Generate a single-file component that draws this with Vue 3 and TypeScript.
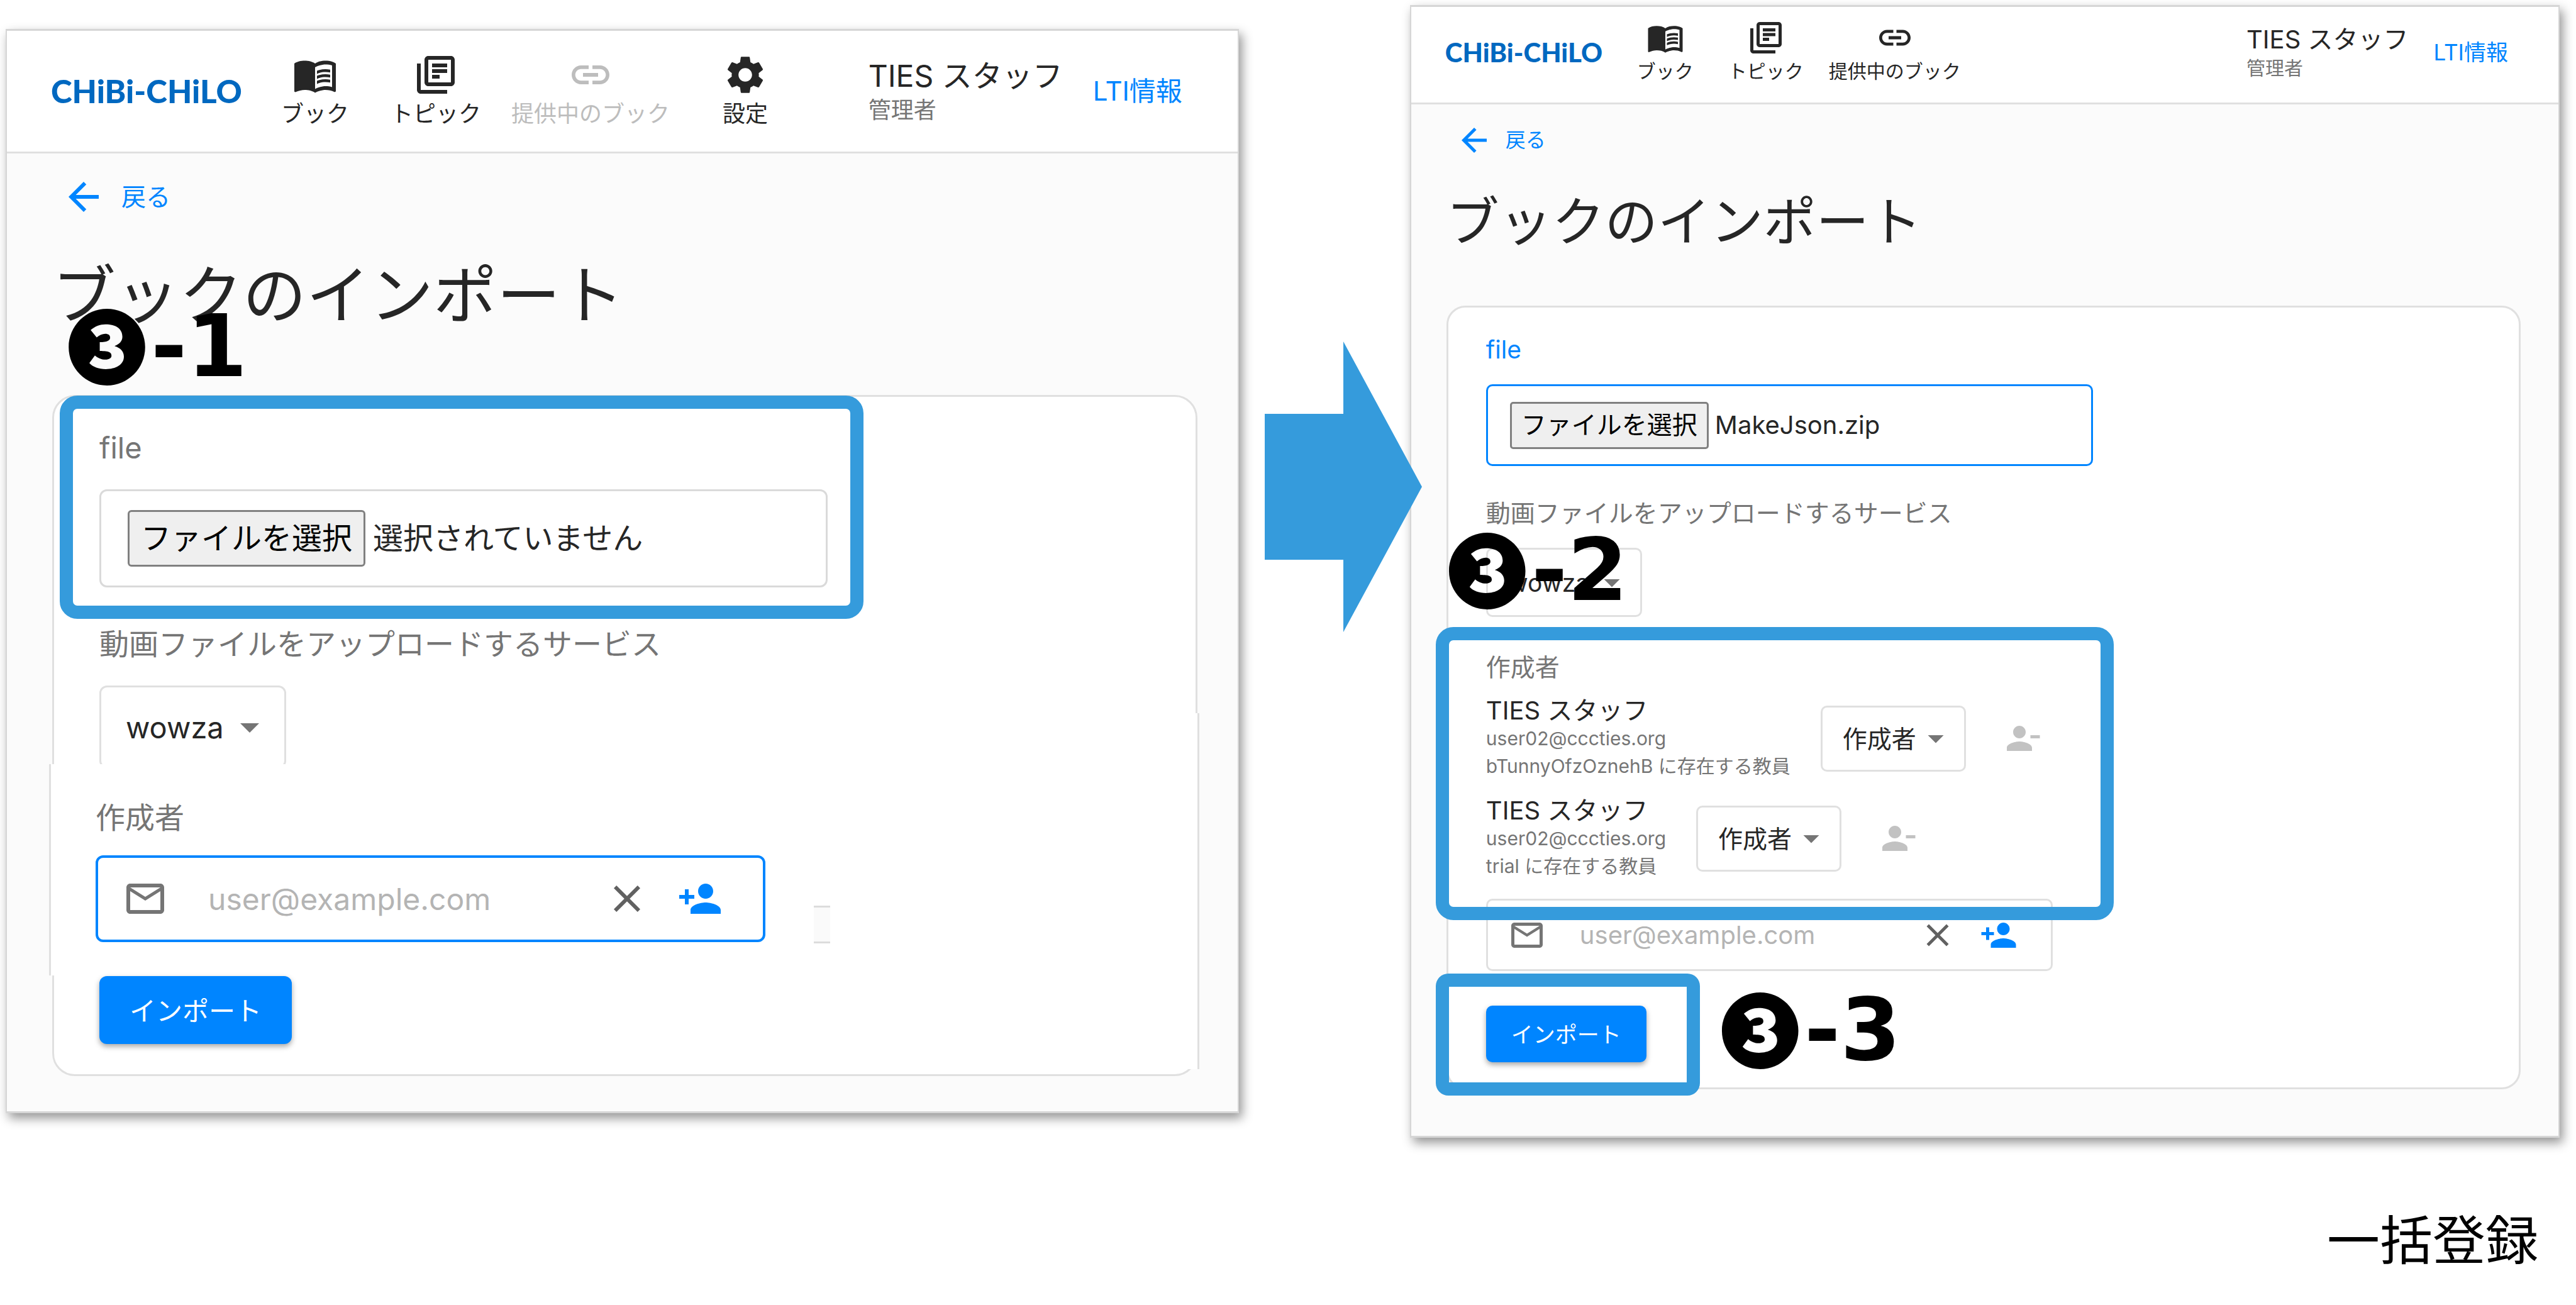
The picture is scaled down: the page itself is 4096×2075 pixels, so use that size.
<script setup lang="ts">
import { ref } from 'vue'

interface NavItem {
  icon: string
  label: string
  disabled?: boolean
}

interface Author {
  name: string
  mail: string
  origin: string
}

interface Panel {
  id: string
  nav: NavItem[]
  fileText: string
  chosen: boolean
  authors: Author[]
}

const icons: Record<string, string> = {
  book: 'M21 5c-1.11-.35-2.33-.5-3.5-.5-1.95 0-4.05.4-5.5 1.5-1.45-1.1-3.55-1.5-5.5-1.5S2.45 4.9 1 6v14.65c0 .25.25.5.5.5.1 0 .15-.05.25-.05C3.1 20.45 5.05 20 6.5 20c1.95 0 4.05.4 5.5 1.5 1.35-.85 3.8-1.5 5.5-1.5 1.65 0 3.35.3 4.75 1.05.1.05.15.05.25.05.25 0 .5-.25.5-.5V6c-.6-.45-1.25-.75-2-1zm0 13.5c-1.1-.35-2.3-.5-3.5-.5-1.7 0-4.15.65-5.5 1.5V8c1.35-.85 3.8-1.5 5.5-1.5 1.2 0 2.4.15 3.5.5v11.5zM17.5 10.5c.88 0 1.73.09 2.5.26V9.24c-.79-.15-1.64-.24-2.5-.24-1.7 0-3.24.29-4.5.83v1.66c1.13-.64 2.7-.99 4.5-.99zM13 12.49v1.66c1.13-.64 2.7-.99 4.5-.99.88 0 1.73.09 2.5.26V11.9c-.79-.15-1.64-.24-2.5-.24-1.7 0-3.24.3-4.5.83zM17.5 14.33c-1.7 0-3.24.29-4.5.83v1.66c1.13-.64 2.7-.99 4.5-.99.88 0 1.73.09 2.5.26v-1.52c-.79-.16-1.64-.24-2.5-.24z',
  topic: 'M4 6H2v14c0 1.1.9 2 2 2h14v-2H4V6zm16-4H8c-1.1 0-2 .9-2 2v12c0 1.1.9 2 2 2h12c1.1 0 2-.9 2-2V4c0-1.1-.9-2-2-2zm0 14H8V4h12v12zM10 9h8v2h-8zm0 3h4v2h-4zm0-6h8v2h-8z',
  link: 'M3.9 12c0-1.71 1.39-3.1 3.1-3.1h4V7H7c-2.76 0-5 2.24-5 5s2.24 5 5 5h4v-1.9H7c-1.71 0-3.1-1.39-3.1-3.1zM8 13h8v-2H8v2zm9-6h-4v1.9h4c1.71 0 3.1 1.39 3.1 3.1s-1.39 3.1-3.1 3.1h-4V17h4c2.76 0 5-2.24 5-5s-2.24-5-5-5z',
  gear: 'M19.14 12.94c.04-.3.06-.61.06-.94 0-.32-.02-.64-.07-.94l2.03-1.58c.18-.14.23-.41.12-.61l-1.92-3.32c-.12-.22-.37-.29-.59-.22l-2.39.96c-.5-.38-1.03-.7-1.62-.94l-.36-2.54c-.04-.24-.24-.41-.48-.41h-3.84c-.24 0-.43.17-.47.41l-.36 2.54c-.59.24-1.13.57-1.62.94l-2.39-.96c-.22-.08-.47 0-.59.22L2.74 8.87c-.12.21-.08.47.12.61l2.03 1.58c-.05.3-.09.63-.09.94s.02.64.07.94l-2.03 1.58c-.18.14-.23.41-.12.61l1.92 3.32c.12.22.37.29.59.22l2.39-.96c.5.38 1.03.7 1.62.94l.36 2.54c.05.24.24.41.48.41h3.84c.24 0 .44-.17.47-.41l.36-2.54c.59-.24 1.13-.56 1.62-.94l2.39.96c.22.08.47 0 .59-.22l1.92-3.32c.12-.22.07-.47-.12-.61l-2.01-1.58zM12 15.6c-1.98 0-3.6-1.62-3.6-3.6s1.62-3.6 3.6-3.6 3.6 1.62 3.6 3.6-1.62 3.6-3.6 3.6z',
  back: 'M20 11H7.83l5.59-5.59L12 4l-8 8 8 8 1.41-1.41L7.83 13H20v-2z',
  mail: 'M22 6c0-1.1-.9-2-2-2H4c-1.1 0-2 .9-2 2v12c0 1.1.9 2 2 2h16c1.1 0 2-.9 2-2V6zm-2 0l-8 5-8-5h16zm0 12H4V8l8 5 8-5v10z',
  close: 'M19 6.41L17.59 5 12 10.59 6.41 5 5 6.41 10.59 12 5 17.59 6.41 19 12 13.41 17.59 19 19 17.59 13.41 12z',
  add: 'M15 12c2.21 0 4-1.79 4-4s-1.79-4-4-4-4 1.79-4 4 1.79 4 4 4zm-9-2V7H4v3H1v2h3v3h2v-3h3v-2H6zm9 4c-2.67 0-8 1.34-8 4v2h16v-2c0-2.66-5.33-4-8-4z',
  remove: 'M14 8c0-2.21-1.79-4-4-4S6 5.79 6 8s1.79 4 4 4 4-1.79 4-4zm3 2v2h6v-2h-6zM2 18v2h16v-2c0-2.66-5.33-4-8-4s-8 1.34-8 4z',
  drop: 'M7 10l5 5 5-5z',
}

const panels: Panel[] = [
  {
    id: 'before',
    nav: [
      { icon: 'book', label: 'ブック' },
      { icon: 'topic', label: 'トピック' },
      { icon: 'link', label: '提供中のブック', disabled: true },
      { icon: 'gear', label: '設定' },
    ],
    fileText: '選択されていません',
    chosen: false,
    authors: [],
  },
  {
    id: 'after',
    nav: [
      { icon: 'book', label: 'ブック' },
      { icon: 'topic', label: 'トピック' },
      { icon: 'link', label: '提供中のブック' },
    ],
    fileText: 'MakeJson.zip',
    chosen: true,
    authors: [
      { name: 'TIES スタッフ', mail: 'user02@cccties.org', origin: 'bTunnyOfzOznehB に存在する教員' },
      { name: 'TIES スタッフ', mail: 'user02@cccties.org', origin: 'trial に存在する教員' },
    ],
  },
]

const picked = ref<Record<string, string>>({})

function openPicker(id: string) {
  document.getElementById(`${id}-file`)?.click()
}

function onPick(id: string, event: Event) {
  const file = (event.target as HTMLInputElement).files?.[0]
  if (file) picked.value[id] = file.name
}
</script>

<template>
  <main class="slide">
    <div class="steps">
      <template v-for="(panel, index) in panels" :key="panel.id">
        <svg v-if="index > 0" class="next" viewBox="0 0 250 462" aria-hidden="true">
          <path d="M0 115H125V0L250 231L125 462V347H0z" />
        </svg>

        <section class="panel" :class="panel.id">
          <header class="head">
            <a class="logo" href="#">CHiBi-CHiLO</a>
            <nav class="nav">
              <button v-for="item in panel.nav" :key="item.label" class="nav-item" type="button" :disabled="item.disabled">
                <svg class="icon" viewBox="0 0 24 24"><path :d="icons[item.icon]" /></svg>
                <span>{{ item.label }}</span>
              </button>
            </nav>
            <div class="user">
              <span class="user-name">TIES スタッフ</span>
              <span class="user-role">管理者</span>
            </div>
            <a class="lti" href="#">LTI情報</a>
          </header>

          <div class="body">
            <a class="back" href="#">
              <svg class="icon" viewBox="0 0 24 24"><path :d="icons.back" /></svg>
              <span>戻る</span>
            </a>
            <h1 class="title">ブックのインポート</h1>

            <form class="card" @submit.prevent>
              <label class="label" :class="{ active: panel.chosen }" :for="`${panel.id}-file`">file</label>
              <div class="file" :class="{ active: panel.chosen }">
                <input :id="`${panel.id}-file`" class="file-input" type="file" tabindex="-1" @change="onPick(panel.id, $event)" />
                <button class="file-button" type="button" @click="openPicker(panel.id)">ファイルを選択</button>
                <span class="file-name">{{ picked[panel.id] ?? panel.fileText }}</span>
              </div>

              <label class="label service-label" :for="`${panel.id}-service`">動画ファイルをアップロードするサービス</label>
              <div class="select service">
                <select :id="`${panel.id}-service`">
                  <option>wowza</option>
                </select>
                <svg class="icon" viewBox="0 0 24 24"><path :d="icons.drop" /></svg>
              </div>

              <div class="authors">
                <label class="label" :for="`${panel.id}-mail`">作成者</label>
                <ul v-if="panel.authors.length" class="author-list">
                  <li v-for="(author, i) in panel.authors" :key="i" class="author">
                    <div class="author-text">
                      <span class="author-name">{{ author.name }}</span>
                      <span class="author-line">{{ author.mail }}</span>
                      <span class="author-line">{{ author.origin }}</span>
                    </div>
                    <div class="select role">
                      <select :aria-label="`${author.origin}`">
                        <option>作成者</option>
                      </select>
                      <svg class="icon" viewBox="0 0 24 24"><path :d="icons.drop" /></svg>
                    </div>
                    <button class="icon-button remove" type="button" disabled aria-label="削除">
                      <svg class="icon" viewBox="0 0 24 24"><path :d="icons.remove" /></svg>
                    </button>
                  </li>
                </ul>
                <div class="mail" :class="{ active: !panel.chosen }">
                  <svg class="icon mail-icon" viewBox="0 0 24 24"><path :d="icons.mail" /></svg>
                  <input :id="`${panel.id}-mail`" type="email" placeholder="user@example.com" />
                  <button class="icon-button" type="button" aria-label="クリア">
                    <svg class="icon" viewBox="0 0 24 24"><path :d="icons.close" /></svg>
                  </button>
                  <button class="icon-button add" type="button" aria-label="追加">
                    <svg class="icon" viewBox="0 0 24 24"><path :d="icons.add" /></svg>
                  </button>
                </div>
              </div>

              <button class="submit" type="submit">インポート</button>

              <template v-if="panel.id === 'before'">
                <i class="patch patch-left"></i>
                <i class="patch patch-right"></i>
                <i class="patch patch-chip"></i>
                <i class="frame frame-file"></i>
                <strong class="mark mark-1"><span>❸</span>-1</strong>
              </template>
              <template v-else>
                <i class="frame frame-authors"></i>
                <i class="frame frame-submit"></i>
                <strong class="mark mark-2"><span>❸</span>-2</strong>
                <strong class="mark mark-3"><span>❸</span>-3</strong>
              </template>
            </form>
          </div>
        </section>
      </template>
    </div>
    <p class="caption">一括登録</p>
  </main>
</template>

<style>
body {
  margin: 0;
  background: #fff;
}
</style>

<style scoped>
* {
  box-sizing: border-box;
}

button,
input,
select {
  font: inherit;
  color: inherit;
  margin: 0;
}

.slide {
  font-family: Inter, "Noto Sans CJK JP", sans-serif;
  color: #262626;
}

.steps {
  display: flex;
  align-items: flex-start;
  padding: 0 26px 0 9px;
}

.next {
  position: relative;
  z-index: 2;
  flex: none;
  width: 250px;
  height: 462px;
  margin: 543px -19px 0 41px;
  fill: #359bdc;
}

/* --u is the spacing unit of a panel; everything inside is a multiple of it */
.panel {
  flex: 1 1 0;
  min-width: 0;
  background: #fbfbfb;
  border: 2px solid #d6d6d6;
  border-top-width: 3px;
  border-bottom-width: 3px;
  box-shadow: 5px 8px 16px rgba(0, 0, 0, 0.42);
}

.before {
  --u: 6px;
  --head: 192px;
  --pad: 72px;
  --pad-end: 88px;
  --logo: 51px;
  --back: 39px;
  --title: 101px;
  --label: 47px;
  --card-end: 64px;
  --foot: 56px;
  --mail: 1065px;
  flex-grow: 1961;
  margin-top: 46px;
}

.after {
  --u: 5px;
  --head: 152px;
  --pad: 56px;
  --pad-end: 80px;
  --logo: 42px;
  --back: 32px;
  --title: 84px;
  --label: 39px;
  --card-end: 60px;
  --foot: 74px;
  --mail: 901px;
  flex-grow: 1828;
  margin-top: 8px;
}

.icon {
  display: block;
  flex: none;
  width: calc(var(--u) * 12);
  height: calc(var(--u) * 12);
  fill: currentColor;
}

.head {
  display: flex;
  align-items: flex-end;
  height: calc(var(--head) + 3px);
  padding: 0 var(--pad-end) calc(var(--u) * 7) calc(var(--pad) - 2px);
  background: #fff;
  border-bottom: 3px solid #e0e0e0;
  white-space: nowrap;
}

.logo {
  width: calc(var(--u) * 54);
  font-family: Lato, sans-serif;
  font-weight: 900;
  font-size: var(--logo);
  line-height: calc(var(--u) * 18);
  color: #0068c0;
  text-decoration: none;
}

.nav {
  display: flex;
}

.nav-item {
  display: flex;
  flex-direction: column;
  align-items: center;
  gap: 8px;
  min-width: calc(var(--u) * 32);
  padding: 0 calc(var(--u) * 4);
  border: 0;
  background: none;
  font-size: calc(var(--u) * 6);
  line-height: calc(var(--u) * 6);
}

.nav-item:disabled {
  color: #bdbdbd;
}

.user {
  display: flex;
  flex-direction: column;
  margin-left: auto;
}

.user-name {
  font-size: calc(var(--u) * 8);
  line-height: calc(var(--u) * 10);
}

.user-role {
  font-size: calc(var(--u) * 6);
  line-height: calc(var(--u) * 8);
  color: #757575;
}

.lti {
  margin-left: calc(var(--u) * 8);
  font-size: calc(var(--u) * 7);
  line-height: calc(var(--u) * 18);
  color: #0085ff;
  text-decoration: none;
}

.body {
  padding: calc(var(--u) * 6 - 3px) var(--card-end) var(--foot) var(--pad);
}

.back {
  display: flex;
  align-items: center;
  gap: calc(var(--u) * 4);
  width: fit-content;
  padding-left: 14px;
  font-size: var(--back);
  line-height: calc(var(--u) * 12);
  color: #0085ff;
  text-decoration: none;
}

.title {
  margin: calc(var(--u) * 10) 0 calc(var(--u) * 16 + 3px);
  font-weight: 400;
  font-size: var(--title);
  line-height: calc(var(--u) * 20);
  white-space: nowrap;
}

.card {
  position: relative;
  padding: calc(var(--u) * 9 - 3px) calc(var(--u) * 12) calc(var(--u) * 8);
  background: #fff;
  border: 3px solid #e0e0e0;
  border-radius: calc(var(--u) * 6);
}

.label {
  display: block;
  width: fit-content;
  font-size: var(--label);
  line-height: calc(var(--u) * 10);
  color: #757575;
}

.label.active {
  color: #0085ff;
}

.service-label {
  margin-top: calc(var(--u) * 10);
}

.file {
  display: flex;
  align-items: center;
  gap: calc(var(--u) * 2);
  max-width: calc(var(--u) * 193);
  height: calc(var(--u) * 26);
  margin-top: calc(var(--u) * 6);
  padding: 0 calc(var(--u) * 7);
  border: 3px solid #dadada;
  border-radius: calc(var(--u) * 2);
  font-size: calc(var(--u) * 8);
}

.file.active,
.mail.active {
  border-color: #0085ff;
}

.file-input {
  position: absolute;
  width: 1px;
  height: 1px;
  opacity: 0;
}

.file-button {
  height: calc(var(--u) * 15);
  padding: 0 calc(var(--u) * 3);
  border: 3px solid #808080;
  border-radius: var(--u);
  background: #efefef;
  color: #000;
  line-height: calc(var(--u) * 12);
}

.file-name {
  line-height: calc(var(--u) * 12);
}

.select {
  position: relative;
  width: fit-content;
}

.select select {
  display: block;
  height: calc(var(--u) * 21);
  padding: 0 calc(var(--u) * 15) 0 calc(var(--u) * 7 - 3px);
  border: 3px solid #e0e0e0;
  border-radius: calc(var(--u) * 2);
  background: #fff;
  appearance: none;
  font-size: var(--label);
}

.select .icon {
  position: absolute;
  top: 50%;
  right: calc(var(--u) * 4 - 2px);
  margin-top: calc(var(--u) * -6);
  color: #757575;
  pointer-events: none;
}

.service {
  margin-top: calc(var(--u) * 6);
}

.service select {
  height: calc(var(--u) * 22);
  padding-right: calc(var(--u) * 16);
}

.authors {
  position: relative;
  z-index: 2;
  margin-top: calc(var(--u) * 11);
}

.before .authors {
  margin: calc(var(--u) * 8) 0 0 calc(var(--u) * -1);
}

.author-list {
  display: flex;
  flex-direction: column;
  gap: 27px;
  margin: 22px 0 0;
  padding: 0;
  list-style: none;
}

.author {
  display: flex;
  align-items: center;
  white-space: nowrap;
}

.author-text {
  display: flex;
  flex-direction: column;
  line-height: 44px;
}

.author-name {
  font-size: calc(var(--u) * 8);
}

.author-line {
  font-size: calc(var(--u) * 6);
  color: #757575;
}

.role {
  margin-left: 48px;
}

.icon-button {
  padding: 0;
  border: 0;
  background: none;
  color: #616161;
}

.remove {
  margin-left: calc(var(--u) * 12);
  color: #c2c2c2;
}

.mail {
  display: flex;
  align-items: center;
  max-width: var(--mail);
  height: calc(var(--u) * 23);
  margin-top: calc(var(--u) * 5);
  padding: 0 calc(var(--u) * 11 - 2px) 0 calc(var(--u) * 7 - 3px);
  border: 3px solid #e0e0e0;
  border-radius: calc(var(--u) * 2);
}

.mail.active {
  border-width: 4px;
}

.after .mail {
  margin-top: calc(var(--u) * 6);
}

.mail-icon {
  color: #757575;
}

.mail input {
  flex: 1;
  min-width: 0;
  padding: 0;
  margin-left: calc(var(--u) * 10 + 4px);
  border: 0;
  outline: 0;
  background: none;
  font-size: calc(var(--u) * 8);
}

.mail input::placeholder {
  color: #b4b4b4;
  opacity: 1;
}

.add {
  margin-left: calc(var(--u) * 7 + 2px);
  color: #0085ff;
}

.submit {
  position: relative;
  z-index: 2;
  display: block;
  height: calc(var(--u) * 18);
  margin-top: calc(var(--u) * 9);
  padding: 0 calc(var(--u) * 8) 4px;
  border: 0;
  border-radius: calc(var(--u) * 2);
  background: #0085ff;
  box-shadow: 0 4px 8px rgba(0, 0, 0, 0.35);
  color: #fff;
  font-size: calc(var(--u) * 7);
}

.after .submit {
  margin-top: calc(var(--u) * 11);
}

/* seams where the left panel was joined from two captures */
.patch {
  position: absolute;
  z-index: 1;
  background: #fff;
}

.patch-left {
  top: 584px;
  left: -8px;
  width: 50%;
  height: 336px;
  border-left: 3px solid #e0e0e0;
}

.patch-right {
  top: 503px;
  right: -6px;
  width: 24px;
  height: 566px;
  border-right: 3px solid #e0e0e0;
}

.patch-chip {
  top: 809px;
  left: 1208px;
  width: 26px;
  height: 60px;
  background: #fafafa;
  border: solid #dcdcdc;
  border-width: 3px 0;
}

.frame {
  position: absolute;
  z-index: 3;
  border: 21px solid #359bdc;
  border-radius: 28px;
  pointer-events: none;
}

.frame-file {
  top: -2px;
  left: 9px;
  width: 1278px;
  height: 355px;
}

.frame-authors {
  top: 508px;
  left: -20px;
  width: 1078px;
  height: 466px;
}

.frame-submit {
  bottom: -13px;
  left: -20px;
  width: 420px;
  height: 194px;
  border-radius: 20px;
}

.mark {
  position: absolute;
  z-index: 4;
  display: flex;
  align-items: center;
  height: 120px;
  font-family: "DejaVu Sans", "Noto Sans CJK JP", sans-serif;
  font-size: 138px;
  font-weight: 700;
  line-height: 120px;
  color: #000;
  white-space: nowrap;
  pointer-events: none;
}

.mark span {
  height: 130px;
  font-family: "Noto Sans CJK JP", sans-serif;
  font-size: 128px;
  font-weight: 900;
  padding-right: 6px;
}

.mark-1 {
  top: -140px;
  left: 20px;
}

.mark-2 {
  top: 358px;
  left: -2px;
}

.mark-3 {
  bottom: 31px;
  left: 432px;
}

.caption {
  margin: 114px 60px 0 0;
  font-size: 84px;
  line-height: 100px;
  color: #000;
  text-align: right;
}
</style>
